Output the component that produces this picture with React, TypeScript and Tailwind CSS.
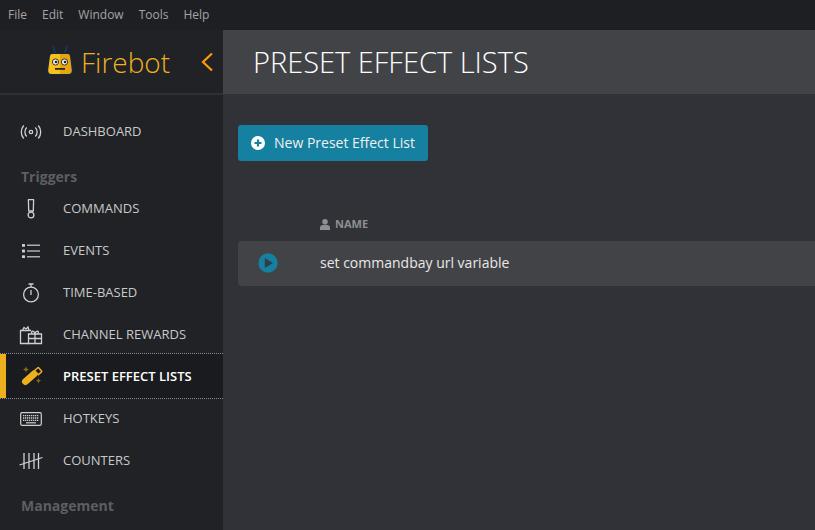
import React from "react";

const S = { fill: "none", stroke: "currentColor", strokeWidth: 1.3 } as const;

function IconBox({ children }: { children: React.ReactNode }) {
  return <div className="flex w-[63px] shrink-0 items-center justify-center pr-[1px] text-[#d0d0d0]">{children}</div>;
}

const Dash = () => (
  <svg width="24" height="16" viewBox="0 0 24 16" {...S}>
    <circle cx="12" cy="8" r="1.7" />
    <path d="M7.700 3.500a6.500 6.500 0 0 0 0 9M16.300 3.500a6.500 6.500 0 0 1 0 9M4.700 1.500a10 10 0 0 0 0 13M19.300 1.500a10 10 0 0 1 0 13" />
  </svg>
);
const Cmd = () => (
  <svg width="10" height="20" viewBox="0 0 10 20" {...S}>
    <path d="M2.400 .7h5.200l-.3 11.300H2.700z" strokeLinejoin="round" />
    <circle cx="5" cy="16" r="2.900" />
  </svg>
);
const Events = () => (
  <svg width="20" height="16" viewBox="0 0 20 16" fill="currentColor">
    <rect x="1" y="1" width="3" height="2.800" rx=".6" />
    <rect x="1" y="6.600" width="3" height="2.800" rx=".6" />
    <rect x="1" y="12.200" width="3" height="2.800" rx=".6" />
    <rect x="6" y="1.600" width="13" height="1.200" />
    <rect x="6" y="7.400" width="13" height="1.200" />
    <rect x="6" y="13.200" width="13" height="1.200" />
  </svg>
);
const Timer = () => (
  <svg width="18" height="20" viewBox="0 0 18 20" {...S}>
    <circle cx="9" cy="11.500" r="7.400" />
    <path d="M9 7v5M9 4V1.500M6.500 1h5" />
  </svg>
);
const Gift = () => (
  <svg width="24" height="20" viewBox="0 0 24 20" {...S}>
    <path d="M10 18.500H1.500V5.500H12" />
    <path d="M3.500 5.500 5 2.500 7 4l2-2 1 3.500" />
    <path d="M9.500 9h13v9.500h-13zM9.500 13.500h13M16 7v11.500M13 8.500c-1.500-3 2-3.500 3 0 1-3.500 4.500-3 3 0" />
  </svg>
);
const Wand = () => (
  <svg width="22" height="22" viewBox="0 0 22 22">
    <path d="M4.500 16.500 13 9" stroke="#ecb01f" strokeWidth="7" strokeLinecap="round" fill="none" />
    <path d="M13.500 5.500l3-2.500a1 1 0 0 1 1.400 0l2.400 2.700a1 1 0 0 1 0 1.400l-3 2.700z" fill="#1a1b1e" stroke="#ecb01f" strokeWidth="1.500" />
    <path d="M5 1.500l.9 2.100 2.100.9-2.100.9L5 7.500l-.9-2.100L2 4.500l2.100-.9zM17.500 13l.8 1.900 1.900.8-1.900.8-.8 1.900-.8-1.900-1.900-.8 1.900-.8z" fill="#8a6a1c" />
  </svg>
);
const Keys = () => (
  <svg width="22" height="14" viewBox="0 0 22 14">
    <rect x=".7" y=".7" width="20.600" height="12.600" rx="1.200" fill="none" stroke="currentColor" strokeWidth="1.200" />
    <path d="M3 3.600h16M3 6h16M3 8.400h16" stroke="currentColor" strokeWidth="1.300" strokeDasharray="1.300 .7" />
    <path d="M6 10.800h10" stroke="currentColor" strokeWidth="1.200" />
  </svg>
);
const Tally = () => (
  <svg width="24" height="18" viewBox="0 0 24 18" {...S}>
    <path d="M5 1v16M10 1v16M15 1v16M19.500 1v16M.5 13 23.500 5.500" />
  </svg>
);

function NavItem({ icon, label, active }: { icon: React.ReactNode; label: string; active?: boolean }) {
  if (active) {
    return (
      <div className="flex h-[46px] items-stretch border-y border-dotted border-[#8a8b8e] bg-[#1a1b1e]">
        <div className="w-[6px] shrink-0 bg-[#ecb01f]" />
        <div className="flex w-[57px] shrink-0 items-center justify-center pr-[6px]">{icon}</div>
        <div className="flex items-center pt-[1px] text-[13px] font-semibold text-white">{label}</div>
      </div>
    );
  }
  return (
    <div className="flex h-[42px] items-center">
      <IconBox>{icon}</IconBox>
      <div className="text-[13px] text-[#c9c9c9]">{label}</div>
    </div>
  );
}

function Heading({ children }: { children: React.ReactNode }) {
  return <div className="mt-[14px] flex h-[21px] items-center pb-[2px] pl-[21px] text-[14px] font-bold text-[#5d5e62]">{children}</div>;
}

export default function App() {
  return (
    <div className="flex h-[530px] w-[815px] flex-col overflow-hidden bg-[#313237] font-['Open_Sans',sans-serif]">
      <div className="flex h-[30px] shrink-0 items-center gap-[15px] bg-[#1e1f23] pl-[8px] text-[12px] text-[#a3a4a6]">
        <span>File</span>
        <span>Edit</span>
        <span>Window</span>
        <span>Tools</span>
        <span>Help</span>
      </div>
      <div className="flex min-h-0 flex-1">
        <aside className="flex w-[223px] shrink-0 flex-col overflow-hidden bg-[#202226]">
          <div className="flex h-[65px] shrink-0 items-center border-b-2 border-[#2e3033] pl-[46px]">
            <svg width="29" height="32" viewBox="0 0 29 32" className="mt-[-3px]">
              <path d="M9.500 10 7 2M18.500 10 21 2" stroke="#1c3454" strokeWidth="2.200" fill="none" strokeLinecap="round" />
              <path d="M4 9.500q0-1 1.500-1h17q1.500 0 1.500 1l3.500 15q1 6.500-4 6.500H4.500q-5 0-4-6.500z" fill="#14293f" />
              <path d="M6 10h8v20H5.500q-3.500 0-3.300-4l1.800-14q.2-2 2-2z" fill="#f8c11c" />
              <path d="M14 10h8q1.800 0 2 2l1.800 14q.2 4-3.300 4H14z" fill="#e5a511" />
              <circle cx="9.500" cy="18" r="3.100" fill="#f2f2f2" stroke="#333" />
              <circle cx="18.500" cy="18" r="3.100" fill="#f2f2f2" stroke="#333" />
              <circle cx="10" cy="18" r="1.300" fill="#222" />
              <circle cx="19" cy="18" r="1.300" fill="#222" />
              <rect x="9" y="24" width="10" height="1.800" fill="#2a2a2a" />
            </svg>
            <span className="ml-[6px] text-[28px] leading-none font-light text-[#eeb021]">Firebot</span>
            <svg width="14" height="20" viewBox="0 0 14 20" className="ml-[30px]" fill="none" stroke="#fd9d00" strokeWidth="2.200">
              <path d="M12 1.500 3 10l9 8.500" />
            </svg>
          </div>
          <div className="flex shrink-0 flex-col pt-[16px]">
            <NavItem icon={<Dash />} label="DASHBOARD" />
            <Heading>Triggers</Heading>
            <NavItem icon={<Cmd />} label="COMMANDS" />
            <NavItem icon={<Events />} label="EVENTS" />
            <NavItem icon={<Timer />} label="TIME-BASED" />
            <NavItem icon={<Gift />} label="CHANNEL REWARDS" />
            <div className="-mt-[3px] -mb-[1px]">
              <NavItem icon={<Wand />} label="PRESET EFFECT LISTS" active />
            </div>
            <NavItem icon={<Keys />} label="HOTKEYS" />
            <NavItem icon={<Tally />} label="COUNTERS" />
            <Heading>Management</Heading>
          </div>
        </aside>
        <main className="flex min-w-0 flex-1 flex-col">
          <div className="flex h-[64px] shrink-0 items-center bg-[#424347] pl-[30px] text-[29px] font-light text-white">
            PRESET EFFECT LISTS
          </div>
          <div className="flex flex-col pt-[31px] pl-[15px]">
            <button className="flex h-[36px] w-[190px] items-center rounded-[3px] bg-[#15809f] pb-[2px] pl-[13px] text-[14px] text-[#f0f0f0]">
              <svg width="14" height="14" viewBox="0 0 14 14" className="mt-[1px] mr-[9px]">
                <circle cx="7" cy="7" r="7" fill="#fff" />
                <path d="M7 3.500v7M3.500 7h7" stroke="#15809f" strokeWidth="2.200" />
              </svg>
              New Preset Effect List
            </button>
            <div className="mt-[50px] flex h-[26px] items-center pl-[82px] text-[11px] font-bold text-[#8e8f92]">
              <svg width="10" height="11" viewBox="0 0 10 11" fill="currentColor" className="mr-[5px]">
                <circle cx="5" cy="2.800" r="2.800" />
                <path d="M0 11V9a3 3 0 0 1 3-3h4a3 3 0 0 1 3 3v2z" />
              </svg>
              NAME
            </div>
            <div className="mt-[4px] flex h-[45px] items-center rounded-l-[4px] bg-[#424347]">
              <div className="flex w-[60px] shrink-0 justify-center pb-[2px]">
                <svg width="20" height="20" viewBox="0 0 20 20">
                  <circle cx="10" cy="10" r="9.700" fill="#15809f" />
                  <path d="M6.800 5v10l8.200-5z" fill="#313d4a" />
                </svg>
              </div>
              <div className="pb-[2px] pl-[22px] text-[14px] text-[#e8e8e8]">set commandbay url variable</div>
            </div>
          </div>
        </main>
      </div>
    </div>
  );
}
